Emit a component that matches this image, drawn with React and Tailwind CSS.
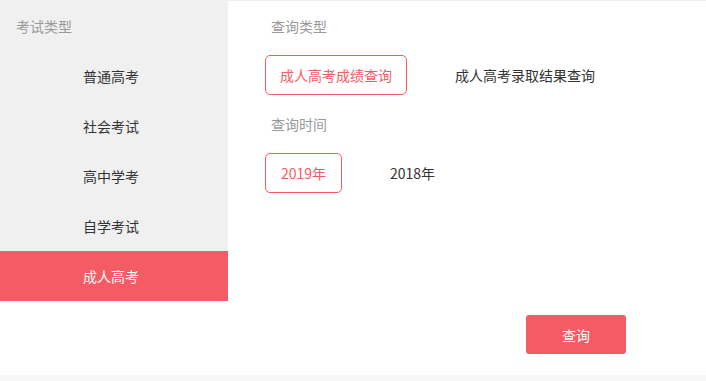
import React, { useState } from 'react';

const FONT = { fontFamily: '"Noto Sans CJK SC", "Noto Sans", sans-serif' };

const types = ['普通高考', '社会考试', '高中学考', '自学考试', '成人高考'];
const queries = ['成人高考成绩查询', '成人高考录取结果查询'];
const years = ['2019年', '2018年'];

const Option = ({ label, active, onClick, className }) => (
  <button
    onClick={onClick}
    className={`h-10 rounded-[5px] border text-sm ${active ? 'border-[#f55b65] text-[#f55b65]' : 'border-transparent text-[#333]'} ${className}`}
  >
    {label}
  </button>
);

export default function App() {
  const [type, setType] = useState(4);
  const [query, setQuery] = useState(0);
  const [year, setYear] = useState(0);

  return (
    <div className="w-[706px] h-[381px] bg-white flex flex-col border-t border-[#efefef]" style={FONT}>
      <div className="flex flex-1">
        <div className="w-[228px] flex flex-col">
          <div className="bg-[#f0f0f0]">
            <div className="h-[50px] pl-4 flex items-center text-sm text-[#999]">考试类型</div>
            {types.slice(0, 4).map((t, i) => (
              <div
                key={t}
                onClick={() => setType(i)}
                className={`h-[50px] flex items-center justify-center pr-1.5 text-sm ${type === i ? 'bg-[#f55b65] text-white' : 'text-[#333]'}`}
              >
                {t}
              </div>
            ))}
          </div>
          <div
            onClick={() => setType(4)}
            className={`h-[50px] flex items-center justify-center pr-1.5 text-sm ${type === 4 ? 'bg-[#f55b65] text-white' : 'bg-[#f0f0f0] text-[#333]'}`}
          >
            {types[4]}
          </div>
        </div>
        <div className="flex-1 flex flex-col pl-[37px]">
          <div className="h-[50px] pl-1.5 flex items-center text-sm text-[#999]">查询类型</div>
          <div className="mt-1 flex items-center gap-[47px]">
            {queries.map((q, i) => (
              <Option key={q} label={q} active={query === i} onClick={() => setQuery(i)} className={i === 0 ? 'w-[142px]' : ''} />
            ))}
          </div>
          <div className="h-[58px] pl-1.5 flex items-center text-sm text-[#999]">查询时间</div>
          <div className="flex items-center gap-[47px]">
            {years.map((y, i) => (
              <Option key={y} label={y} active={year === i} onClick={() => setYear(i)} className={i === 0 ? 'w-[77px]' : ''} />
            ))}
          </div>
          <div className="flex-1" />
          <div className="flex justify-end pr-[80px] pb-[21px]">
            <button className="w-[100px] h-[39px] rounded-[3px] bg-[#f55b65] text-white text-sm">查询</button>
          </div>
        </div>
      </div>
      <div className="h-[6px] bg-[#f7f7f7]" />
    </div>
  );
}
